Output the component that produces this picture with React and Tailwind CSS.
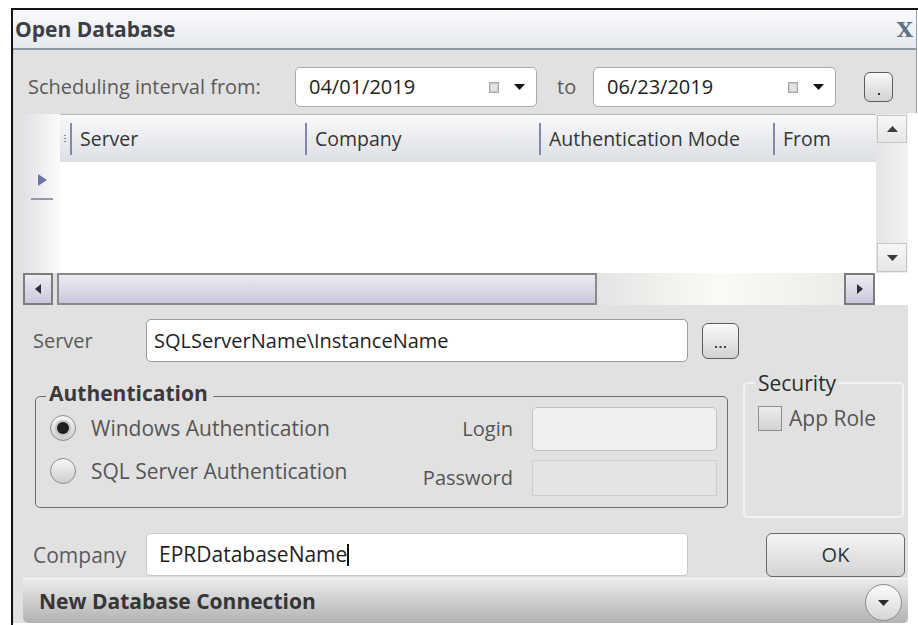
import React from "react";

function DownTri({ fill = "#141414" }) {
  return (
    <svg width="11" height="6" viewBox="0 0 11 6" className="block">
      <path d="M0 0h11L5.5 6z" fill={fill} />
    </svg>
  );
}

function CalendarGlyph() {
  return (
    <svg width="10" height="11" viewBox="0 0 10 11" className="block">
      <rect x="0.5" y="0.5" width="9" height="10" fill="#c9c9c9" stroke="#a9a9a9" />
      <rect x="2" y="2" width="6" height="7" fill="#e3e3e3" />
    </svg>
  );
}

function DateBox({ value, className }) {
  return (
    <div className={`${className} h-[40px] bg-white border border-[#a9a9a9] rounded-[5px] flex items-center pl-[13px] pr-[11px]`}>
      <span className="flex-1 text-[20px] leading-none text-[#1e1e1e]">{value}</span>
      <CalendarGlyph />
      <div className="ml-[15px]">
        <DownTri />
      </div>
    </div>
  );
}

function HeaderCol({ label, className }) {
  return (
    <div className={`${className} flex items-center`}>
      <div className="w-[2px] h-[32px] bg-[#8686aa]" />
      <span className="ml-[8px] text-[19.5px] leading-none text-[#353535]">{label}</span>
    </div>
  );
}

function ScrollBtnH({ dir }) {
  return (
    <div className="h-full border-2 border-[#7c7c7c] bg-gradient-to-b from-[#ececf3] to-[#c9c9dc] flex items-center justify-center">
      <svg width="6" height="10" viewBox="0 0 6 10" className="block">
        {dir === "left" ? <path d="M6 0v10L0 5z" fill="#2e2e3a" /> : <path d="M0 0v10l6-5z" fill="#2e2e3a" />}
      </svg>
    </div>
  );
}

function ScrollBtnV({ dir, className }) {
  return (
    <div className={`${className} w-[30px] border border-[#c6c6c6] bg-gradient-to-b from-[#f7f7f7] to-[#e6e6e6] flex items-center justify-center`}>
      <svg width="11" height="6" viewBox="0 0 11 6" className="block">
        {dir === "up" ? <path d="M0 6h11L5.5 0z" fill="#3a3a3a" /> : <path d="M0 0h11L5.5 6z" fill="#3a3a3a" />}
      </svg>
    </div>
  );
}

function Radio({ checked }) {
  return (
    <div className="w-[26px] h-[26px] rounded-full border border-[#8d8d8d] bg-gradient-to-b from-[#f7f7f7] to-[#cdcdcd] flex items-center justify-center shrink-0">
      {checked && <div className="w-[12px] h-[12px] rounded-full bg-[#202020] shadow-[0_0_0_2px_#c4c4c4]" />}
    </div>
  );
}

export default function App() {
  return (
    <div className="w-[918px] h-[625px] bg-white overflow-hidden font-['Open_Sans',sans-serif]">
      <div className="h-[8px]" />
      <div className="ml-[11px] h-[2px] bg-[#151515]" />
      <div className="flex h-[615px]">
        <div className="w-[11px]" />
        <div className="w-[2px] bg-[#151515]" />
        <div className="w-[904px] flex flex-col">
          {/* title bar */}
          <div className="h-[38px] flex items-center justify-between pl-[2px] pr-[3px] bg-gradient-to-b from-[#f9fafc] to-[#e6e9ee] border-r border-[#9aa0a6]">
            <span className="font-bold text-[21px] leading-none text-[#3b3f45]">Open Database</span>
            <span className="font-['DejaVu_Serif',serif] font-bold text-[21px] leading-none text-[#607185]">X</span>
          </div>
          <div className="h-[2px] bg-[#8f979f]" />

          <div className="flex flex-1">
            {/* dialog body */}
            <div className="w-[895px] h-[573px] bg-[#e1e1e1] border-l border-[#cfcfcf] pl-[9px] flex flex-col">
              {/* scheduling interval */}
              <div className="mt-[17px] h-[40px] flex items-center">
                <span className="w-[272px] pl-[5px] text-[20px] leading-none text-[#5a5a5a]">Scheduling interval from:</span>
                <DateBox value="04/01/2019" className="w-[242px]" />
                <span className="w-[56px] pl-[20px] text-[20px] leading-none text-[#5a5a5a]">to</span>
                <DateBox value="06/23/2019" className="w-[243px]" />
                <div className="ml-[28px] w-[29px] h-[30px] rounded-[6px] border border-[#5c5c5c] bg-gradient-to-b from-[#fafafa] to-[#d2d2d2] flex flex-col items-center">
                  <div className="mt-[20px] w-[2px] h-[2px] bg-[#333]" />
                </div>
              </div>

              {/* connections grid */}
              <div className="mt-[7px] h-[191px] w-[885px] flex flex-col">
                <div className="flex h-[159px]">
                  <div className="w-[37px] bg-gradient-to-r from-[#e2e2e6] to-[#fbfbfb] flex flex-col">
                    <div className="h-[48px]" />
                    <div className="ml-[8px] w-[22px] h-[38px] border-b-2 border-[#9595b5] flex items-center pl-[7px]">
                      <svg width="9" height="12" viewBox="0 0 9 12" className="block">
                        <path d="M0 0v12l9-6z" fill="#7373a2" />
                      </svg>
                    </div>
                  </div>
                  <div className="w-[816px] flex flex-col">
                    <div className="h-[48px] border-t border-[#b9b9bd] bg-gradient-to-b from-[#f8f9fa] to-[#dcdfe4] flex">
                      <div className="w-[10px] flex items-center pl-[4px]">
                        <div className="flex flex-col gap-[2px]">
                          <div className="w-[2px] h-[1px] bg-[#8a8a9a]" />
                          <div className="w-[2px] h-[1px] bg-[#8a8a9a]" />
                          <div className="w-[2px] h-[1px] bg-[#8a8a9a]" />
                        </div>
                      </div>
                      <HeaderCol label="Server" className="w-[235px]" />
                      <HeaderCol label="Company" className="w-[234px]" />
                      <HeaderCol label="Authentication Mode" className="w-[234px]" />
                      <HeaderCol label="From" className="w-[103px]" />
                    </div>
                    <div className="flex-1 bg-white" />
                  </div>
                  <div className="w-[32px] flex flex-col bg-gradient-to-r from-[#e6e6e6] to-[#f1f1f1] pt-[1px] pl-[1px]">
                    <ScrollBtnV dir="up" className="h-[28px]" />
                    <div className="flex-1" />
                    <ScrollBtnV dir="down" className="h-[29px] mb-[1px]" />
                  </div>
                </div>
                <div className="flex h-[32px]">
                  <div className="w-[30px]">
                    <ScrollBtnH dir="left" />
                  </div>
                  <div className="ml-[4px] w-[540px] border-2 border-[#8a8a8a] bg-gradient-to-b from-[#ebebf2] to-[#c9c9dc]" />
                  <div className="w-[247px] bg-gradient-to-r from-[#e4e4e4] via-[#fbfbf5] to-[#ebebe9]" />
                  <div className="w-[31px]">
                    <ScrollBtnH dir="right" />
                  </div>
                  <div className="w-[33px] bg-white" />
                </div>
              </div>

              {/* server */}
              <div className="mt-[14px] h-[43px] flex items-center">
                <span className="w-[123px] pl-[10px] text-[20px] leading-none text-[#5a5a5a]">Server</span>
                <div className="w-[542px] h-[43px] bg-white border border-[#9c9c9c] rounded-[5px] flex items-center pl-[7px]">
                  <span className="text-[20px] leading-none text-[#1e1e1e]">SQLServerName\InstanceName</span>
                </div>
                <div className="ml-[14px] w-[37px] h-[36px] rounded-[6px] border border-[#5c5c5c] bg-gradient-to-b from-[#fafafa] to-[#d2d2d2] flex items-end justify-center pb-[10px]">
                  <svg width="11" height="2" viewBox="0 0 11 2" className="block">
                    <rect x="0" y="0" width="2" height="2" fill="#444" />
                    <rect x="4.5" y="0" width="2" height="2" fill="#444" />
                    <rect x="9" y="0" width="2" height="2" fill="#444" />
                  </svg>
                </div>
              </div>

              {/* authentication + security */}
              <div className="mt-[11px] h-[145px] flex items-start">
                <fieldset className="ml-[12px] mt-[14px] w-[693px] h-[121px] border border-[#6e6e6e] rounded-[5px] flex">
                  <legend className="ml-[10px] pl-[3px] pr-[5px] pb-[7px] font-bold text-[21px] leading-[12px] text-[#3a3a3a]">Authentication</legend>
                  <div className="w-[364px] pl-[14px] flex flex-col">
                    <div className="mt-[9px] h-[26px] flex items-center">
                      <Radio checked />
                      <span className="ml-[15px] text-[21px] leading-none text-[#555]">Windows Authentication</span>
                    </div>
                    <div className="mt-[17px] h-[26px] flex items-center">
                      <Radio />
                      <span className="ml-[15px] text-[21px] leading-none text-[#555]">SQL Server Authentication</span>
                    </div>
                  </div>
                  <div className="flex flex-col">
                    <div className="mt-[1px] h-[44px] flex items-center">
                      <span className="w-[113px] text-right text-[20px] leading-none text-[#555]">Login</span>
                      <div className="ml-[19px] w-[185px] h-[44px] bg-[#f0f0f0] border border-[#c2c2c2] rounded-[5px]" />
                    </div>
                    <div className="mt-[9px] h-[36px] flex items-center">
                      <span className="w-[113px] text-right text-[20px] leading-none text-[#555]">Password</span>
                      <div className="ml-[19px] w-[185px] h-[36px] bg-[#e4e4e4] border border-[#cdcdcd] rounded-[1px]" />
                    </div>
                  </div>
                </fieldset>
                <fieldset className="ml-[15px] w-[161px] h-[145px] border-2 border-[#eef3f8] rounded-[5px]">
                  <legend className="ml-[10px] px-[3px] text-[21px] leading-[20px] text-[#2c2c2c]">Security</legend>
                  <div className="mt-[13px] pl-[13px] flex items-center">
                    <div className="w-[24px] h-[25px] border border-[#8e8e8e] bg-gradient-to-b from-[#ececec] to-[#d3d3d3]" />
                    <span className="ml-[7px] text-[21px] leading-none text-[#555]">App Role</span>
                  </div>
                </fieldset>
              </div>

              {/* company */}
              <div className="mt-[15px] h-[44px] flex items-center">
                <span className="w-[123px] pl-[10px] text-[21px] leading-none text-[#5a5a5a]">Company</span>
                <div className="w-[542px] h-[43px] bg-white border border-[#c9c9c9] rounded-[4px] flex items-center pl-[12px] self-start">
                  <span className="text-[21px] leading-none text-[#1e1e1e]">EPRDatabaseName</span>
                  <div className="w-[2px] h-[22px] bg-[#111]" />
                </div>
                <div className="ml-[78px] w-[139px] h-[44px] rounded-[6px] border border-[#6a6a6a] bg-gradient-to-b from-[#f4f4f4] to-[#d4d4d4] flex items-center justify-center">
                  <span className="text-[20px] leading-none text-[#333]">OK</span>
                </div>
              </div>

              {/* footer */}
              <div className="mt-[1px] h-[45px] w-[885px] rounded-b-[6px] border-t border-[#f7f7f7] bg-gradient-to-b from-[#ebebeb] to-[#b2b2b2] flex items-center justify-between pl-[16px] pr-[6px]">
                <span className="font-bold text-[21px] leading-none text-[#353535]">New Database Connection</span>
                <div className="mt-[3px] w-[37px] h-[37px] rounded-full border border-[#8a8a8a] bg-gradient-to-b from-[#fbfbfb] to-[#d6d6d6] flex items-center justify-center">
                  <DownTri fill="#2a2a2a" />
                </div>
              </div>
            </div>
            {/* right edge */}
            <div className="w-[9px] flex flex-col">
              <div className="h-[63px] bg-[#e1e1e1] border-r border-[#9aa0a6]" />
              <div className="flex-1 bg-white" />
            </div>
          </div>
        </div>
      </div>
    </div>
  );
}
